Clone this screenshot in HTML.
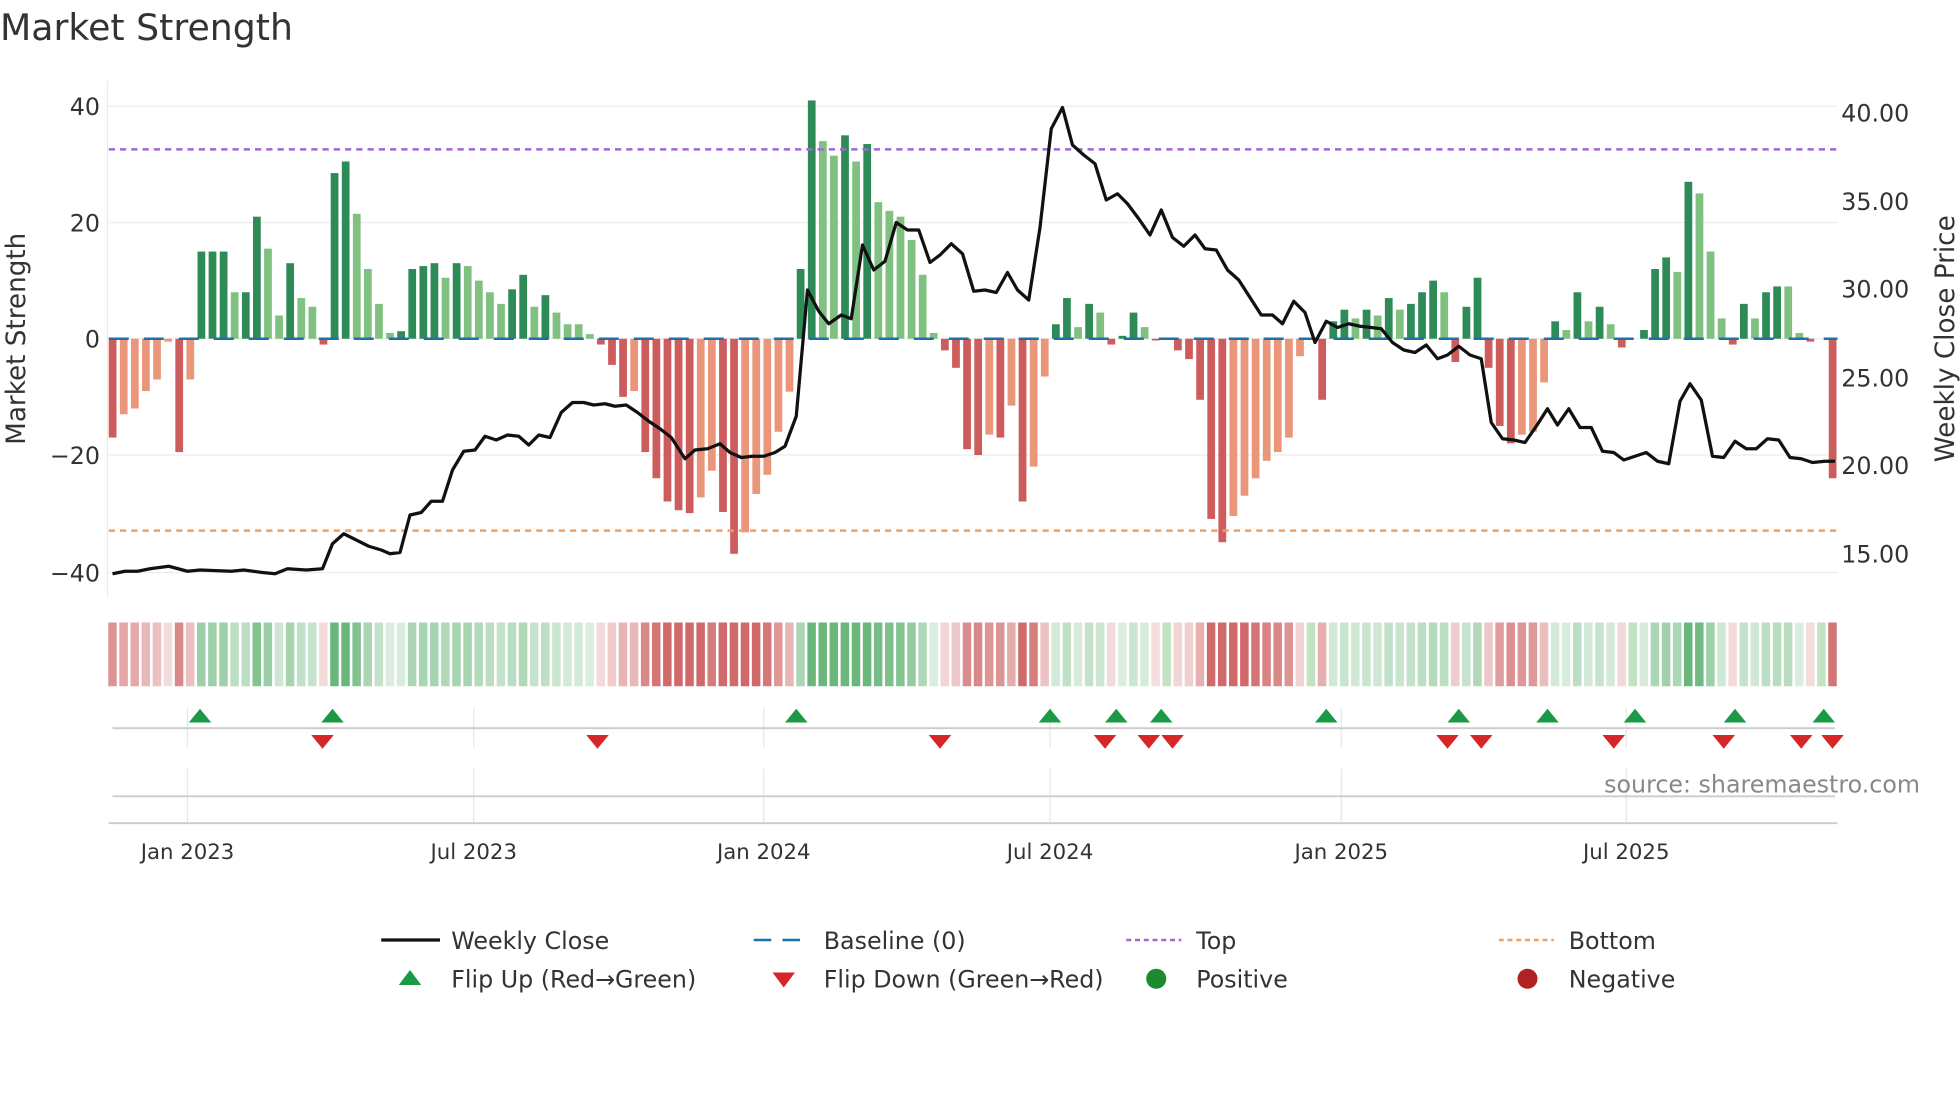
<!DOCTYPE html>
<html><head><meta charset="utf-8"><style>
html,body{margin:0;padding:0;background:#fff;width:1960px;height:1102px;overflow:hidden}
svg{display:block;font-family:"DejaVu Sans","Liberation Sans",sans-serif}
</style></head><body>
<svg id="s" width="1960" height="1102" viewBox="0 0 1568 881.6" xmlns="http://www.w3.org/2000/svg">
<rect width="1568" height="882" fill="#fff"/>
<text x="0" y="32" font-size="29" fill="#333">Market Strength</text>
<g stroke="#ececec" stroke-width="1">
<line x1="87" x2="1470" y1="85" y2="85"/><line x1="87" x2="1470" y1="178" y2="178"/><line x1="87" x2="1470" y1="271" y2="271"/><line x1="87" x2="1470" y1="364" y2="364"/><line x1="87" x2="1470" y1="458" y2="458"/>
<line x1="86" x2="86" y1="65" y2="478"/>
</g>
<g font-size="19" fill="#333" text-anchor="end">
<text x="80" y="92">40</text><text x="80" y="185">20</text><text x="80" y="278">0</text><text x="80" y="371">−20</text><text x="80" y="465">−40</text>
</g>
<g font-size="19" fill="#333">
<text x="1473" y="97">40.00</text><text x="1473" y="168">35.00</text><text x="1473" y="238">30.00</text><text x="1473" y="309">25.00</text><text x="1473" y="379">20.00</text><text x="1473" y="450">15.00</text>
</g>
<text transform="translate(20,271) rotate(-90)" font-size="21" fill="#333" text-anchor="middle">Market Strength</text>
<text transform="translate(1563,271) rotate(-90)" font-size="21" fill="#333" text-anchor="middle">Weekly Close Price</text>
<g id="bars"></g>
<line x1="87" x2="1470" y1="271" y2="271" stroke="#1f6fa8" stroke-width="2" stroke-dasharray="16,12"/>
<line x1="87" x2="1470" y1="119.5" y2="119.5" stroke="#a066dd" stroke-width="2" stroke-dasharray="5,4"/>
<line x1="87" x2="1470" y1="424.5" y2="424.5" stroke="#f0a060" stroke-width="2" stroke-dasharray="5,4"/>
<polyline fill="none" stroke="#111" stroke-width="2.6" stroke-linejoin="round" points="90,459 100,457 110,457 120,455 135,453 150,457 160,456 185,457 195,456 210,458 220,459 230,455 245,456 258,455 266,435 275,427 285,432 295,437 305,440 312,443 320,442 328,412 337,410 345,401 354,401 362,376 371,361 380,360 388,349 397,352 406,348 415,349 423,356 431,348 440,350 449,330 458,322 467,322 475,324 484,323 492,325 501,324 510,330 519,337 528,343 537,350 548,367 556,360 566,359 576,355 584,362 593,366 602,365 611,365 620,362 628,357 637,333 646,232 655,249 663,259 673,252 681,255 690,196 699,216 708,209 717,178 726,184 735,184 744,210 752,204 761,195 770,203 779,233 788,232 797,234 806,218 814,232 823,240 832,182 841,103 850,86 858,116 867,124 876,131 885,160 894,155 902,163 911,175 920,188 929,168 938,190 947,197 956,188 964,199 973,200 982,216 991,224 1000,238 1009,252 1018,252 1026,259 1035,241 1044,250 1052,274 1061,257 1070,262 1079,259 1088,261 1097,262 1105,263 1114,274 1123,280 1132,282 1141,276 1150,287 1158,284 1167,277 1176,284 1185,287 1193,338 1202,351 1211,352 1220,354 1229,341 1238,327 1246,340 1255,327 1264,342 1273,342 1282,361 1291,362 1299,368 1308,365 1317,362 1326,369 1335,371 1344,321 1352,307 1361,320 1370,365 1379,366 1388,353 1397,359 1405,359 1414,351 1423,352 1432,366 1441,367 1450,370 1460,369 1468,369"/>
<g id="strip"></g>
<g stroke="#e6e6e6" stroke-width="1">
<line x1="150" x2="150" y1="566" y2="598"/><line x1="379" x2="379" y1="566" y2="598"/><line x1="611" x2="611" y1="566" y2="598"/><line x1="840" x2="840" y1="566" y2="598"/><line x1="1073" x2="1073" y1="566" y2="598"/><line x1="1301" x2="1301" y1="566" y2="598"/>
<line x1="150" x2="150" y1="615" y2="658"/><line x1="379" x2="379" y1="615" y2="658"/><line x1="611" x2="611" y1="615" y2="658"/><line x1="840" x2="840" y1="615" y2="658"/><line x1="1073" x2="1073" y1="615" y2="658"/><line x1="1301" x2="1301" y1="615" y2="658"/>
</g>
<line x1="90" x2="1468" y1="582.5" y2="582.5" stroke="#ccc" stroke-width="1.5"/>
<line x1="90" x2="1468" y1="637" y2="637" stroke="#ccc" stroke-width="1.5"/>
<line x1="87" x2="1470" y1="658.5" y2="658.5" stroke="#ccc" stroke-width="1.5"/>
<g id="flips"></g>
<text x="1536" y="634" font-size="19" fill="#888" text-anchor="end">source: sharemaestro.com</text>
<g font-size="17" fill="#333" text-anchor="middle">
<text x="150" y="687">Jan 2023</text><text x="379" y="687">Jul 2023</text><text x="611" y="687">Jan 2024</text><text x="840" y="687">Jul 2024</text><text x="1073" y="687">Jan 2025</text><text x="1301" y="687">Jul 2025</text>
</g>
<g font-size="19" fill="#333">
<line x1="305" x2="352" y1="752" y2="752" stroke="#111" stroke-width="2.6"/><text x="361" y="759">Weekly Close</text>
<line x1="603" x2="647" y1="752" y2="752" stroke="#1f6fa8" stroke-width="2" stroke-dasharray="14,9"/><text x="659" y="759">Baseline (0)</text>
<line x1="901" x2="945" y1="752" y2="752" stroke="#a066dd" stroke-width="2" stroke-dasharray="4,3"/><text x="957" y="759">Top</text>
<line x1="1199" x2="1243" y1="752" y2="752" stroke="#f0a060" stroke-width="2" stroke-dasharray="4,3"/><text x="1255" y="759">Bottom</text>
<polygon points="319,788 337,788 328,776" fill="#1a9a45"/><text x="361" y="790">Flip Up (Red→Green)</text>
<polygon points="618,778 636,778 627,790" fill="#d62728"/><text x="659" y="790">Flip Down (Green→Red)</text>
<circle cx="925" cy="783" r="8" fill="#1e8a2e"/><text x="957" y="790">Positive</text>
<circle cx="1222" cy="783" r="8" fill="#b22222"/><text x="1255" y="790">Negative</text>
</g>
</svg>
<script>
var v="-17d -13l -12l -9l -7l -0.5l -19.5d -7l 15d 15d 15d 8l 8d 21d 15.5l 4l 13d 7l 5.5l -1d 28.5d 30.5d 21.5l 12l 6l 1l 1.3d 12d 12.5d 13d 10.5l 13d 12.5l 10l 8l 6l 8.5d 11d 5.5l 7.5d 4.5l 2.5l 2.5l 0.8l -1d -4.5d -10d -9l -19.5d -24d -28d -29.5d -30d -27.3l -22.7l -29.8d -37d -33.3l -26.7l -23.4l -16l -9.1l 12d 41d 34l 31.5l 35d 30.5l 33.5d 23.5l 22l 21l 17l 11l 1l -2d -5d -19d -20d -16.5l -17d -11.5l -28d -22l -6.5l 2.5d 7d 2l 6d 4.5l -1d 0.5d 4.5d 2l -0.3d 0l -2d -3.5d -10.5d -31d -35d -30.5l -27l -24l -21l -19.5l -17l -3l 0l -10.5d 3d 5d 3.5l 5d 4l 7d 5l 6d 8d 10d 8l -4d 5.5d 10.5d -5d -15d -18d -16.5l -16l -7.5l 3d 1.5l 8d 3l 5.5d 2.5l -1.5d 0l 1.5d 12d 14d 11.5l 27d 25l 15l 3.5l -1d 6d 3.5l 8d 9d 9l 1l -0.5d 0l -24d".split(" ");
var NS="http://www.w3.org/2000/svg",n=v.length,b=document.getElementById("bars"),st=document.getElementById("strip");
function el(p,t,a){var e=document.createElementNS(NS,t);for(var k in a)e.setAttribute(k,a[k]);p.appendChild(e);}
for(var i=0;i<n;i++){var s=v[i],val=parseFloat(s),d=s.slice(-1)=="d",x=90+i*(1466-90)/(n-1);
var c=val>=0?(d?"#2e8b57":"#80c080"):(d?"#cd5c5c":"#e9967a");
var h=Math.abs(val)*4.65;if(h>0.3)el(b,"rect",{x:x-3,y:val>=0?271-h:271,width:6.2,height:h,fill:c});
var a=Math.min(1,0.22+Math.abs(val)/34);var sc=val>=0?"rgba(70,165,90,"+(a*0.8)+")":"rgba(200,80,80,"+(a*0.85)+")";
if(val==0)sc="rgba(120,190,120,0.45)";
el(st,"rect",{x:x-3.4,y:498,width:6.8,height:51,fill:sc});}
var f=document.getElementById("flips");
[160,266,637,840,893,929,1061,1167,1238,1308,1388,1459].forEach(function(x){el(f,"polygon",{points:(x-9)+",578 "+(x+9)+",578 "+x+",567",fill:"#1a9a45"});});
[258,478,752,884,919,938,1158,1185,1291,1379,1441,1466].forEach(function(x){el(f,"polygon",{points:(x-9)+",588 "+(x+9)+",588 "+x+",599",fill:"#d62728"});});
</script>
</body></html>
